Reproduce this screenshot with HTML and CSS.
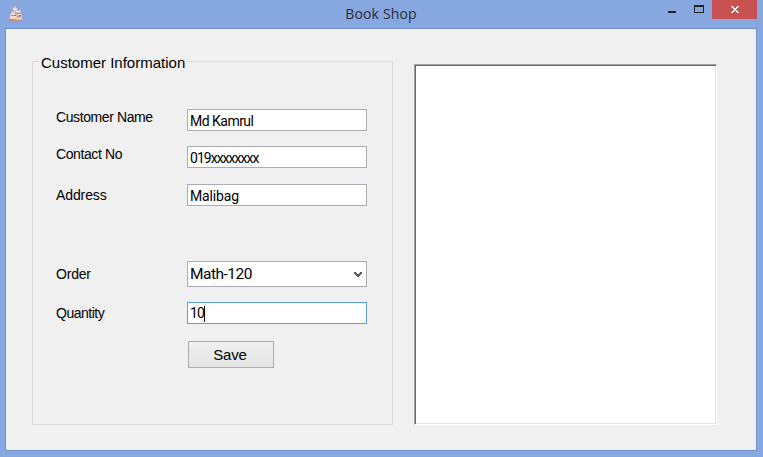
FILE: index.html
```html
<!DOCTYPE html>
<html lang="en">
<head>
<meta charset="utf-8">
<title>Book Shop</title>
<link rel="stylesheet" href="styles.css">
</head>
<body>
<div class="window">
  <header class="titlebar">
    <svg class="app-icon" width="16" height="16" viewBox="0 0 16 16">
      <path d="M4 1h1v1h1V0h2v2h1v2h4v4h1v4l1 2-2 1H1v-2l1-2V8l2-2 1-2z" fill="#d3c0c2"/>
      <path d="M5 2h4v2H5z" fill="#dfe0ea"/>
      <path d="M3 7h4v2H3zM2 10h6v2H2zM8 5h4v1H8zM10 8h3v1h-3z" fill="#efdcd4"/>
      <path d="M7 7h6v1H7zM3 9h4v1H3zM9 10h4v1H9z" fill="#bd8f8a"/>
      <path d="M6 9h2v1H6zM11 9h2v1h-2z" fill="#94707a"/>
      <path d="M1 13h5l2 1h6v1H1z" fill="#b98c80"/>
      <path d="M2 12h5v1H2zM8 12h5v1H8z" fill="#efd3b8"/>
    </svg>
    <h1 class="title">Book Shop</h1>
    <div class="controls">
      <svg class="glyphs" width="62" height="19" viewBox="0 0 62 19" shape-rendering="crispEdges">
        <path d="M18 11h8v2h-8z" fill="#222"/>
        <path d="M44 5h10v8H44zM45 7v5h8V7z" fill="#222" fill-rule="evenodd"/>
      </svg>
      <div class="close">
        <svg width="8" height="7" viewBox="0 0 8 7" shape-rendering="crispEdges">
          <path d="M0 0h2v1h1v1h2V1h1V0h2v1H7v1H6v1H5v1h1v1h1v1h1v1H6V6H5V5H3v1H2v1H0V6h1V5h1V4h1V3H2V2H1V1H0z" fill="#fff"/>
        </svg>
      </div>
    </div>
  </header>
  <main class="client">
    <section class="group">
      <h2 class="legend"><span class="legend-text">Customer Information</span></h2>
      <div class="form">
        <span class="label">Customer Name</span>
        <div class="field"><span class="v-name">Md Kamrul</span></div>
        <span class="label">Contact No</span>
        <div class="field"><span class="v-contact">019xxxxxxxx</span></div>
        <span class="label address">Address</span>
        <div class="field"><span class="v-address">Malibag</span></div>
        <span class="label order">Order</span>
        <div class="field combo"><span class="v-order">Math-120</span>
          <svg class="chevron" width="8" height="6" viewBox="0 0 8 6" shape-rendering="crispEdges"><path d="M0 0h2v1h1v1h2V1h1V0h2v2H7v1H6v1H5v1H3V4H2V3H1V2H0z" fill="#5c5c5c"/></svg>
        </div>
        <span class="label quantity">Quantity</span>
        <div class="field focused"><span class="v-quantity">10</span><i class="caret"></i></div>
        <button class="save">Save</button>
      </div>
    </section>
    <section class="output"></section>
  </main>
</div>
</body>
</html>
```
FILE: styles.css
```css
* { box-sizing: border-box; }
body { margin: 0; background: #87a7e0; color: #000; font-family: "Liberation Sans", Arial, sans-serif; }
.window { width: 763px; height: 457px; display: flex; flex-direction: column; padding: 0 6px 6px 5px; }
.titlebar { height: 28px; flex: none; display: grid; grid-template-columns: 107px 1fr 107px; align-items: start; }
.app-icon { margin: 6px 0 0 3px; }
.title { margin: 4px 0 0; text-align: center; font: 14px/20px "Open Sans", sans-serif; letter-spacing: .15px; color: #282c36; }
.controls { display: flex; justify-content: flex-end; }
.glyphs { flex: none; }
.close { width: 45px; height: 19px; background: #c75050; display: flex; justify-content: center; padding-top: 6px; }
.client { flex: 1; border: 1px solid #7091c8; background: #f0f0f0; display: flex; align-items: flex-start; padding: 32px 0 0 26px; }
.group { width: 361px; height: 364px; border: 1px solid #dcdcdc; }
.legend { margin: -8px 0 0 6px; font: 15px/18px "Liberation Sans", sans-serif; }
.legend-text { display: inline-block; width: 148px; background: #f0f0f0; padding-left: 2px; white-space: nowrap; }
.form { display: grid; grid-template-columns: 131px 180px; grid-template-rows: 22px 23px 62px 26px 24px 27px; row-gap: 15px; margin: 37px 0 0 23px; align-items: start; }
.label { font-size: 14px; line-height: 16px; white-space: nowrap; letter-spacing: -.4px; }
.address { margin-top: 3px; letter-spacing: -.1px; }
.order { margin-top: 5px; letter-spacing: -.2px; }
.quantity { margin-top: 3px; letter-spacing: -.5px; }
.field { height: 22px; border: 1px solid #abadb3; background: #fff; padding: 2px 0 0 2px; display: flex; align-items: center; font: 14px/19px Roboto, sans-serif; white-space: nowrap; }
.combo { height: 26px; font-size: 15.5px; justify-content: space-between; padding: 1px 4px 0 2px; }
.focused { border-color: #569de5; padding-top: 1px; }
.caret { width: 1px; height: 16px; background: #000; }
.v-name { letter-spacing: -.52px; }
.v-contact { letter-spacing: -.98px; }
.v-address { letter-spacing: -.15px; }
.v-order { letter-spacing: -.5px; }
.v-quantity { letter-spacing: -.9px; }
.save { grid-column: 2; width: 86px; height: 27px; margin: 0 0 0 1px; padding: 0 2px 0 0; border: 1px solid #acacac; background: linear-gradient(#f0f0f0, #e4e4e4); font: 15px/24px "Liberation Sans", sans-serif; letter-spacing: -.2px; color: #000; }
.output { width: 303px; height: 361px; margin: 3px 0 0 21px; border: 1px solid; border-color: #a0a0a0 #fff #fff #a0a0a0; background: #fff; box-shadow: inset 1px 1px #696969, inset -1px -1px #e3e3e3; }
```
